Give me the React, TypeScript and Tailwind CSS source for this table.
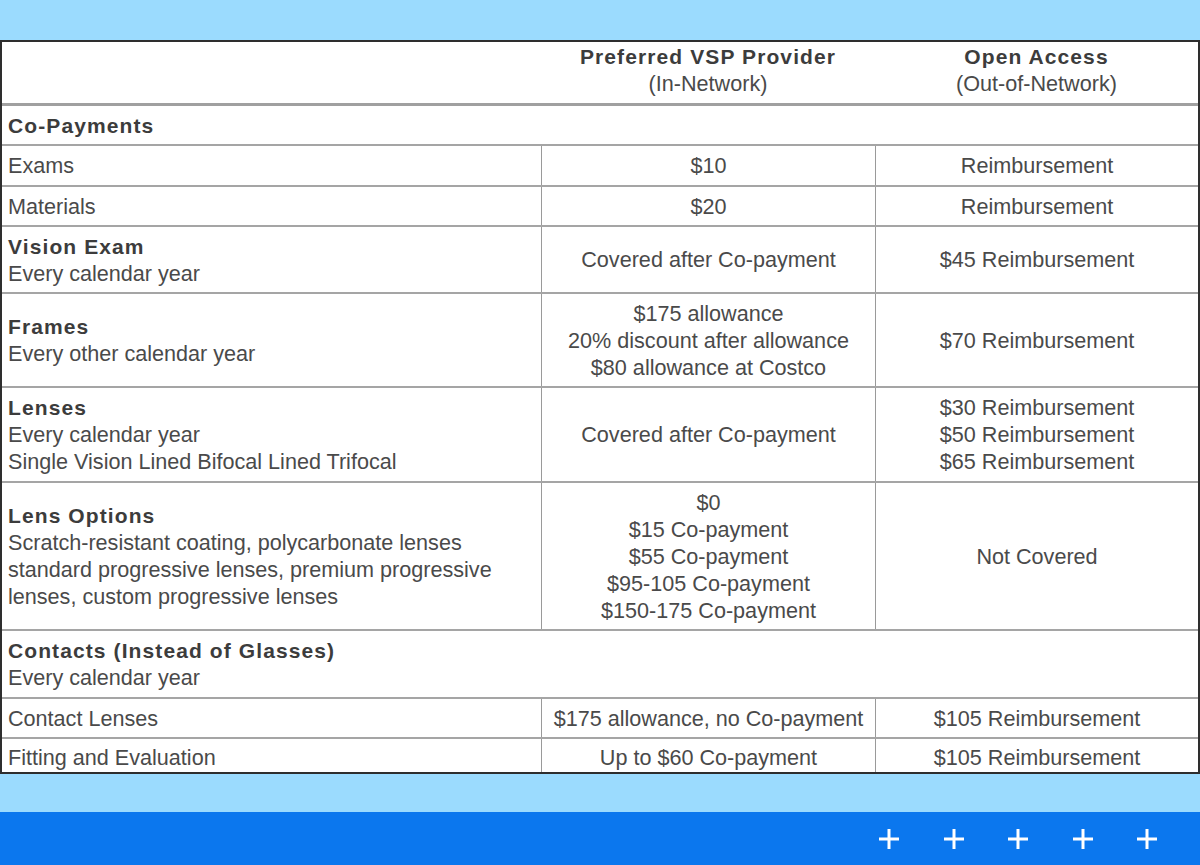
type Row = {
  label?: string;
  sub?: string[];
  plain?: string;
  mid?: string[];
  right?: string[];
  h: string;
  span?: boolean;
  last?: boolean;
};

const rows: Row[] = [
  { label: "Co-Payments", h: "h-[40px]", span: true },
  { plain: "Exams", mid: ["$10"], right: ["Reimbursement"], h: "h-[41px]" },
  { plain: "Materials", mid: ["$20"], right: ["Reimbursement"], h: "h-[40px]" },
  {
    label: "Vision Exam",
    sub: ["Every calendar year"],
    mid: ["Covered after Co-payment"],
    right: ["$45 Reimbursement"],
    h: "h-[67px]",
  },
  {
    label: "Frames",
    sub: ["Every other calendar year"],
    mid: ["$175 allowance", "20% discount after allowance", "$80 allowance at Costco"],
    right: ["$70 Reimbursement"],
    h: "h-[94px]",
  },
  {
    label: "Lenses",
    sub: ["Every calendar year", "Single Vision Lined Bifocal Lined Trifocal"],
    mid: ["Covered after Co-payment"],
    right: ["$30 Reimbursement", "$50 Reimbursement", "$65 Reimbursement"],
    h: "h-[95px]",
  },
  {
    label: "Lens Options",
    sub: [
      "Scratch-resistant coating, polycarbonate lenses",
      "standard progressive lenses, premium progressive",
      "lenses, custom progressive lenses",
    ],
    mid: ["$0", "$15 Co-payment", "$55 Co-payment", "$95-105 Co-payment", "$150-175 Co-payment"],
    right: ["Not Covered"],
    h: "h-[148px]",
  },
  {
    label: "Contacts (Instead of Glasses)",
    sub: ["Every calendar year"],
    h: "h-[68px]",
    span: true,
  },
  {
    plain: "Contact Lenses",
    mid: ["$175 allowance, no Co-payment"],
    right: ["$105 Reimbursement"],
    h: "h-[40px]",
  },
  {
    plain: "Fitting and Evaluation",
    mid: ["Up to $60 Co-payment"],
    right: ["$105 Reimbursement"],
    h: "h-[33px]",
    last: true,
  },
];

const Bold = ({ children }: { children: React.ReactNode }) => (
  <div className="text-[21px] font-bold tracking-[1.1px] text-[#3c3c3c]">{children}</div>
);

const Lines = ({ items }: { items: string[] }) => (
  <div className="text-center">
    {items.map((t) => (
      <div key={t}>{t}</div>
    ))}
  </div>
);

const Plus = () => (
  <svg width="22" height="22" viewBox="0 0 22 22">
    <path d="M11 1v20M1 11h20" stroke="#fff" strokeWidth="3" />
  </svg>
);

export default function App() {
  return (
    <div
      className="flex h-[865px] w-[1200px] flex-col bg-[#9bdbfe] text-[21.6px] leading-[27px] text-[#4a4a4a]"
      style={{ fontFamily: '"Liberation Sans", Arial, sans-serif' }}
    >
      <div className="mt-[40px] border-2 border-[#2e2e2e] bg-white">
        <div className="flex h-[64px] border-b-[3px] border-[#a0a0a0] pb-[5px]">
          <div className="w-[539px]" />
          <div className="flex w-[334px] flex-col items-center justify-center">
            <Bold>Preferred VSP Provider</Bold>
            <div>(In-Network)</div>
          </div>
          <div className="flex flex-1 flex-col items-center justify-center">
            <Bold>Open Access</Bold>
            <div>(Out-of-Network)</div>
          </div>
        </div>
        {rows.map((r, i) => {
          const pad = r.last ? "pt-[3px]" : "";
          return (
            <div
              key={i}
              className={`flex ${r.h} ${r.last ? "" : "border-b-2 border-[#a5a5a5]"}`}
            >
              <div
                className={`flex flex-col justify-center pl-[6px] ${pad} ${r.span ? "flex-1" : "w-[539px]"}`}
              >
                {r.label && <Bold>{r.label}</Bold>}
                {r.sub?.map((s) => (
                  <div key={s}>{s}</div>
                ))}
                {r.plain && <div>{r.plain}</div>}
              </div>
              {!r.span && (
                <>
                  <div
                    className={`flex w-[334px] items-center justify-center border-l border-[#9a9a9a] ${pad}`}
                  >
                    <Lines items={r.mid ?? []} />
                  </div>
                  <div
                    className={`flex flex-1 items-center justify-center border-l border-[#9a9a9a] ${pad}`}
                  >
                    <Lines items={r.right ?? []} />
                  </div>
                </>
              )}
            </div>
          );
        })}
      </div>
      <div className="mt-auto flex h-[53px] items-center justify-end gap-[42.5px] bg-[#0b77ee] pr-[42px]">
        <Plus />
        <Plus />
        <Plus />
        <Plus />
        <Plus />
      </div>
    </div>
  );
}
